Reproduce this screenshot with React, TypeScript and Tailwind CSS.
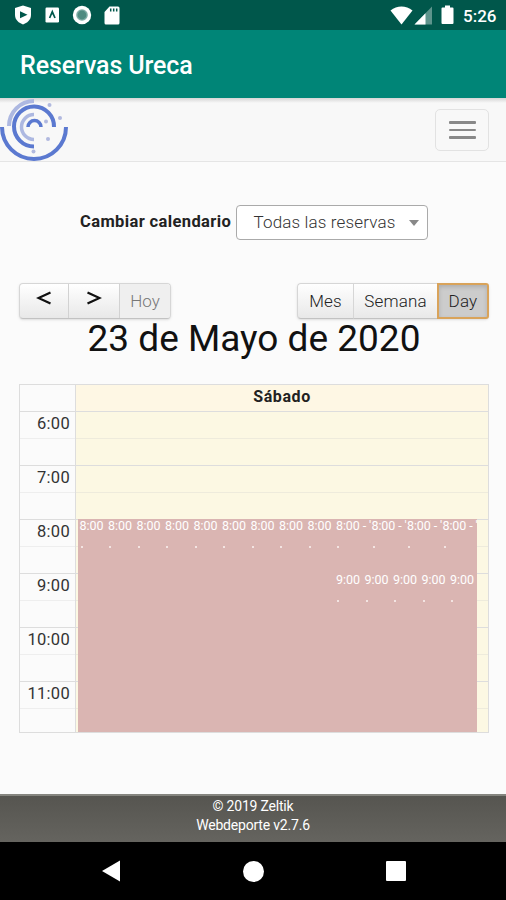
import { useState } from "react";

const HOURS = ["6:00", "7:00", "8:00", "9:00", "10:00", "11:00"];

const VIEWS = [
  { label: "Mes", className: "w-[56px]" },
  { label: "Semana", className: "w-[84px]" },
  { label: "Day", className: "w-[52px]" },
];

const EARLY_EVENTS = Array.from({ length: 9 }, () => "8:00");
const WIDE_EVENTS = Array.from({ length: 4 }, () => "8:00 - '");
const LATE_EVENTS = Array.from({ length: 5 }, () => "9:00");

const StatusBar = () => (
  <div className="flex h-[30px] items-center justify-between bg-[#00574b] pl-[14px] pr-[9px] text-white">
    <div className="flex items-center">
      <svg width="18" height="20" viewBox="0 0 18 20">
        <path d="M9 0.5 17 3v7c0 5-4 8-8 9.5C5 18 1 15 1 10V3z" fill="#fff" />
        <path d="M6 6.2v7l7.5-3.5z" fill="#00574b" />
      </svg>
      <svg className="ml-[13px]" width="15" height="16" viewBox="0 0 15 16">
        <rect x="0.5" y="0.5" width="13.5" height="15" rx="1.2" fill="#fff" />
        <path d="M4.6 11 7.3 4.6 10 11M7.3 4.6v3" fill="none" stroke="#00574b" strokeWidth="1.7" />
      </svg>
      <svg className="ml-[12px]" width="20" height="20" viewBox="0 0 20 20">
        <circle cx="10" cy="10" r="9.2" fill="#fff" />
        <circle cx="10" cy="10" r="5.8" fill="#7fada6" />
        <circle cx="10" cy="10" r="4.4" fill="#4f8b81" />
      </svg>
      <svg className="ml-[12px]" width="16" height="19" viewBox="0 0 16 19">
        <path d="M5.5 0.5H14a1.5 1.5 0 0 1 1.5 1.5v15a1.5 1.5 0 0 1-1.5 1.5H2A1.5 1.5 0 0 1 .5 17V6z" fill="#fff" />
        <path d="M6.7 2.5v3M9.7 2.5v3M12.7 2.5v3" stroke="#00574b" strokeWidth="1.5" />
      </svg>
    </div>
    <div className="flex items-center">
      <svg width="23" height="19" viewBox="0 0 23 19">
        <path d="M0.5 4.5C7-.7 16-.7 22.5 4.5L11.5 18.5z" fill="#fff" />
      </svg>
      <svg className="ml-px" width="19" height="19" viewBox="0 0 19 19">
        <path d="M18 .5v18H.5z" fill="#5d948c" />
        <path d="M11.5 7.2v11.3H.5z" fill="#fff" />
      </svg>
      <svg className="ml-[8px]" width="13" height="20" viewBox="0 0 13 20">
        <path d="M4 .5h5v2h2.5a1 1 0 0 1 1 1V18a1 1 0 0 1-1 1h-10a1 1 0 0 1-1-1V3.5a1 1 0 0 1 1-1H4z" fill="#fff" />
      </svg>
      <span className="ml-[9px] mt-[2px] w-[34px] text-[17px] font-medium leading-none">5:26</span>
    </div>
  </div>
);

const Logo = () => (
  <svg width="70" height="63" viewBox="0 98 70 63" fill="none" strokeWidth="4">
    <path d="M2 127a32 32 0 0 0 64 0" stroke="#5b79d0" />
    <path d="M9 126a25 25 0 0 1 25-25" stroke="#adb8e1" />
    <path d="M54 127a20 20 0 1 0-20 19.5" stroke="#5b79d0" />
    <path d="M34 114.5a12.5 12.5 0 0 0 0 25" stroke="#adb8e1" strokeWidth="3.5" />
    <path d="M28 127a6.5 6.5 0 0 1 13 0" stroke="#5b79d0" strokeWidth="3.5" />
    <g fill="#b1b9df">
      <circle cx="49.5" cy="105" r="2" />
      <circle cx="60" cy="118" r="2" />
      <circle cx="46" cy="121.5" r="2" />
      <circle cx="48" cy="139" r="2" />
      <circle cx="33.5" cy="151.5" r="2" />
    </g>
  </svg>
);

const Navbar = () => (
  <nav className="flex h-[64px] items-start justify-between border-b border-[#e5e5e5] bg-[#f8f8f8] bg-[linear-gradient(#d5d5d5,#f8f8f8_5px)] pr-[17px]">
    <Logo />
    <button className="mt-[11px] flex h-[42px] w-[54px] flex-col items-center justify-center gap-[5px] rounded-[5px] border border-[#e2e2e2]">
      <span className="h-[2.5px] w-[27px] rounded-[1px] bg-[#888]" />
      <span className="h-[2.5px] w-[27px] rounded-[1px] bg-[#888]" />
      <span className="h-[2.5px] w-[27px] rounded-[1px] bg-[#888]" />
    </button>
  </nav>
);

interface EventProps {
  label: string;
  className: string;
}

const Event = ({ label, className }: EventProps) => (
  <div className={`whitespace-nowrap pl-[1.5px] text-[12.5px] leading-[13px] text-white ${className}`}>
    <div>{label}</div>
    <div className="ml-[1px] mt-[13.5px] h-[2px] w-[2px] bg-[#f3e4e2]" />
  </div>
);

const DayGrid = () => (
  <div className="mt-[26px] border border-[#dddddd]">
    <div className="flex h-[27px] border-b border-[#dddddd]">
      <div className="w-[56px] border-r border-[#dddddd]" />
      <div className="flex-1 bg-[#fef7e4] text-center text-[16px] font-bold leading-[24px] tracking-[0.6px] text-[#222]">
        Sábado
      </div>
    </div>
    <div className="relative h-[320px] overflow-hidden">
      {HOURS.map((hour) => (
        <div key={hour} className="flex h-[54px] border-b border-[#dddddd]">
          <div className="w-[56px] border-r border-[#dddddd]">
            <div className="h-[27px] border-b border-[#eeeeee] pr-[5px] text-right text-[16.5px] leading-[24px] tracking-[0.3px] text-[#333]">
              {hour}
            </div>
          </div>
          <div className="flex-1 bg-[#fcf8e3]">
            <div className="h-[27px] border-b border-[#eeebdc]" />
          </div>
        </div>
      ))}
      <div className="absolute bottom-0 left-[58px] right-[11px] top-[107px] bg-[#dab5b2]">
        <div className="flex">
          {EARLY_EVENTS.map((label, i) => (
            <Event key={i} label={label} className="w-[28.5px]" />
          ))}
          {WIDE_EVENTS.map((label, i) => (
            <Event key={i} label={label} className="w-[35.5px] tracking-[-0.1px]" />
          ))}
        </div>
        <div className="mt-[25.5px] flex pl-[256.5px]">
          {LATE_EVENTS.map((label, i) => (
            <Event key={i} label={label} className="w-[28.5px]" />
          ))}
        </div>
      </div>
    </div>
  </div>
);

const App = () => {
  const [view, setView] = useState("Day");

  return (
    <div className="flex h-[900px] w-[506px] flex-col overflow-hidden bg-[#fbfbfb] font-[Roboto,sans-serif]">
      <StatusBar />
      <header className="flex h-[68px] items-center bg-[#008577] pl-[20px] pt-[3px] text-[25px] font-medium tracking-[-0.1px] text-white">
        Reservas Ureca
      </header>
      <Navbar />

      <main className="flex-1 pl-[19px] pr-[17px] pt-[43px]">
        <div className="flex h-[34px] items-center pl-[61px]">
          <label className="w-[155.5px] whitespace-nowrap text-[16.5px] font-bold tracking-[0.38px] text-[#222]">
            Cambiar calendario
          </label>
          <div className="flex h-[35px] w-[192px] items-center justify-between rounded-[4px] border border-[#aaaaaa] bg-white pl-[17px] pr-[8px] pt-px text-[17px] font-light tracking-[0.15px] text-[#333]">
            <span className="whitespace-nowrap">Todas las reservas</span>
            <span className="border-x-[5px] border-t-[6px] border-x-transparent border-t-[#888]" />
          </div>
        </div>

        <div className="mt-[44px] flex justify-between">
          <div className="flex h-[36px] overflow-hidden rounded-[4px] border border-[#d6d6d6] border-b-[#c2c2c2] bg-linear-to-b from-white to-[#e8e8e8] text-[17px] shadow-sm">
            <button className="flex w-[49px] items-center justify-center border-r border-[#d2d2d2]">
              <svg width="16" height="14" viewBox="0 0 16 14" className="mb-[6px]">
                <path d="M14.5 1.5 2.5 7l12 5.500" fill="none" stroke="#111" strokeWidth="2.3" />
              </svg>
            </button>
            <button className="flex w-[51px] items-center justify-center border-r border-[#d2d2d2]">
              <svg width="16" height="14" viewBox="0 0 16 14" className="mb-[6px]">
                <path d="M1.5 1.5l12 5.5-12 5.5" fill="none" stroke="#111" strokeWidth="2.3" />
              </svg>
            </button>
            <button className="w-[50px] bg-[#efefef] pt-[2px] font-light text-[#777]">Hoy</button>
          </div>
          <div className="flex h-[36px] rounded-[4px] bg-linear-to-b from-white to-[#e8e8e8] text-[17px] font-light tracking-[0.2px] text-[#222] shadow-sm">
            {VIEWS.map(({ label, className }) => (
              <button
                key={label}
                onClick={() => setView(label)}
                className={`${className} border pt-px first:rounded-l-[4px] ${
                  view === label
                    ? "rounded-r-[3px] border-2 border-[#d9a35a] bg-[#cccccc] shadow-[inset_0_2px_4px_rgba(0,0,0,0.15)]"
                    : "border-[#d6d6d6] border-b-[#c2c2c2] border-r-0"
                }`}
              >
                {label}
              </button>
            ))}
          </div>
        </div>
        <h2 className="h-[39px] whitespace-nowrap text-center text-[37px] leading-[40px] text-[#111]">
          23 de Mayo de 2020
        </h2>
        <DayGrid />
      </main>

      <footer className="h-[48px] border-t-2 border-[#85857f] bg-linear-to-b from-[#565550] to-[#65645f] pt-px text-center text-[14px] leading-[18.5px] tracking-[-0.2px] text-white">
        <div>© 2019 Zeltik</div>
        <div>Webdeporte v2.7.6</div>
      </footer>
      <div className="flex h-[58px] items-center bg-black pl-[102px]">
        <svg width="18" height="22" viewBox="0 0 18 22">
          <path d="M18 .5v21L0 11z" fill="#fff" />
        </svg>
        <span className="ml-[123px] h-[21px] w-[21px] rounded-full bg-white" />
        <span className="ml-[122px] h-[20px] w-[20px] rounded-[1px] bg-white" />
      </div>
    </div>
  );
};

export default App;
